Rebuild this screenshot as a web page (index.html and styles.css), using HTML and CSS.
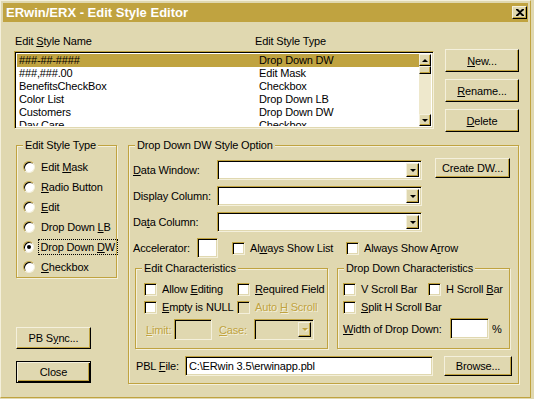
FILE: index.html
```html
<!DOCTYPE html>
<html lang="en">
<head>
    <meta charset="UTF-8">
    <title>ERwin/ERX - Edit Style Editor</title>
    <link rel="stylesheet" href="styles.css">
</head>
<body>

<div class="window">
    <div class="titlebar">
        <span class="title">ERwin/ERX - Edit Style Editor</span>
        <span class="close-btn">
            <svg width="8" height="7" viewBox="0 0 8 7"><path d="M0 0h2l2 2 2-2h2v1L5 3.5 8 6v1H6L4 5 2 7H0V6l3-2.5L0 1z" fill="#000"/></svg>
        </span>
    </div>

    <div class="content">
        <div class="top">
            <div class="list-wrap">
                <div class="col-heads">
                    <span class="head-name">Edit <u>S</u>tyle Name</span>
                    <span>Edit Style Type</span>
                </div>
                <div class="listbox">
                    <div class="rows">
                        <div class="row selected"><span class="c1">###-##-####</span><span>Drop Down DW</span></div>
                        <div class="row"><span class="c1">###,###.00</span><span>Edit Mask</span></div>
                        <div class="row"><span class="c1">BenefitsCheckBox</span><span>Checkbox</span></div>
                        <div class="row"><span class="c1">Color List</span><span>Drop Down LB</span></div>
                        <div class="row"><span class="c1">Customers</span><span>Drop Down DW</span></div>
                        <div class="row"><span class="c1">Day Care</span><span>Checkbox</span></div>
                    </div>
                    <div class="vscroll">
                        <div class="sb-btn"><span class="tri-up"></span></div>
                        <div class="sb-thumb"></div>
                        <div class="sb-track"></div>
                        <div class="sb-btn"><span class="tri-down"></span></div>
                    </div>
                </div>
            </div>
            <div class="side-btns">
                <div class="btn tall"><u>N</u>ew...</div>
                <div class="btn tall"><u>R</u>ename...</div>
                <div class="btn tall"><u>D</u>elete</div>
            </div>
        </div>

        <div class="bottom">
            <div class="left-col">
                <div class="group type-group">
                    <span class="group-title">Edit Style Type</span>
                    <div class="radio-row"><span class="radio"></span><span>Edit <u>M</u>ask</span></div>
                    <div class="radio-row"><span class="radio"></span><span><u>R</u>adio Button</span></div>
                    <div class="radio-row"><span class="radio"></span><span><u>E</u>dit</span></div>
                    <div class="radio-row"><span class="radio"></span><span>Drop Down <u>L</u>B</span></div>
                    <div class="radio-row"><span class="radio checked"></span><span class="focus">Drop Down <u>D</u>W</span></div>
                    <div class="radio-row"><span class="radio"></span><span><u>C</u>heckbox</span></div>
                </div>
                <div class="btn sync">PB S<u>y</u>nc...</div>
                <div class="btn default close">Close</div>
            </div>

            <div class="group option-group">
                <span class="group-title">Drop Down DW Style Option</span>

                <div class="opt-row">
                    <span class="opt-label"><u>D</u>ata Window:</span>
                    <div class="field combo wide"><span class="combo-arrow"><span class="tri-down"></span></span></div>
                    <div class="btn create">Create DW...</div>
                </div>
                <div class="opt-row gap">
                    <span class="opt-label">Display Column:</span>
                    <div class="field combo wide"><span class="combo-arrow"><span class="tri-down"></span></span></div>
                </div>
                <div class="opt-row gap">
                    <span class="opt-label">Da<u>t</u>a Column:</span>
                    <div class="field combo wide"><span class="combo-arrow"><span class="tri-down"></span></span></div>
                </div>
                <div class="opt-row gap">
                    <span class="acc-label">Accelerator:</span>
                    <div class="field accel"></div>
                    <label class="chk-label show-list"><span class="chk"></span><span>Al<u>w</u>ays Show List</span></label>
                    <label class="chk-label"><span class="chk"></span><span>Always Show A<u>r</u>row</span></label>
                </div>

                <div class="sub-row">
                    <div class="group edit-char">
                        <span class="group-title">Edit Characteristics</span>
                        <div class="chk-row">
                            <label class="chk-label col-a"><span class="chk"></span><span>Allow <u>E</u>diting</span></label>
                            <label class="chk-label"><span class="chk"></span><span><u>R</u>equired Field</span></label>
                        </div>
                        <div class="chk-row next">
                            <label class="chk-label col-a"><span class="chk"></span><span><u>E</u>mpty is NULL</span></label>
                            <label class="chk-label disabled"><span class="chk off"></span><span>Auto <u>H</u> Scroll</span></label>
                        </div>
                        <div class="limit-row disabled">
                            <span class="limit-label"><u>L</u>imit:</span>
                            <div class="field off limit-box"></div>
                            <span class="case-label"><u>C</u>ase:</span>
                            <div class="field off combo case-box"><span class="combo-arrow"><span class="tri-down off"></span></span></div>
                        </div>
                    </div>

                    <div class="group dd-char">
                        <span class="group-title">Drop Down Characteristics</span>
                        <div class="chk-row">
                            <label class="chk-label col-b"><span class="chk"></span><span>V Scroll Bar</span></label>
                            <label class="chk-label"><span class="chk"></span><span>H Scroll <u>B</u>ar</span></label>
                        </div>
                        <div class="chk-row next">
                            <label class="chk-label"><span class="chk"></span><span><u>S</u>plit H Scroll Bar</span></label>
                        </div>
                        <div class="width-row">
                            <span class="width-label"><u>W</u>idth of Drop Down:</span>
                            <div class="field width-box"></div>
                            <span class="pct">%</span>
                        </div>
                    </div>
                </div>

                <div class="pbl-row">
                    <span class="pbl-label">PBL <u>F</u>ile:</span>
                    <div class="field pbl-box">C:\ERwin 3.5\erwinapp.pbl</div>
                    <div class="btn browse">Browse...</div>
                </div>
            </div>
        </div>
    </div>
</div>

</body>
</html>
```

FILE: styles.css
```css
:root {
    --face: #e0d8b0;
    --light: #f4f0dc;
    --gold: #c0a340;
    --track: #eee8cc;
}
* {
    box-sizing: border-box;
}
body {
    margin: 0;
    background: var(--face);
    font-family: "Liberation Sans", Arial, sans-serif;
    font-size: 11px;
    letter-spacing: -0.15px;
    color: #000;
}
u {
    text-decoration: underline;
    text-underline-offset: 1px;
}
.window {
    width: 531px;
    height: 398px;
    padding: 2px;
    border: 1px solid var(--light);
    border-right-color: var(--gold);
    border-bottom-color: var(--gold);
}
.titlebar {
    height: 19px;
    background: var(--gold);
    display: flex;
    align-items: center;
    justify-content: space-between;
    padding: 0 1px 0 3px;
    color: #fff;
    font-weight: bold;
    font-size: 13px;
    letter-spacing: 0;
}
.close-btn {
    width: 15px;
    height: 13px;
    display: flex;
    align-items: center;
    justify-content: center;
    background: var(--face);
    border: 1px solid var(--light);
    border-right-color: #000;
    border-bottom-color: #000;
    box-shadow: inset -1px -1px var(--gold);
}

/* bevels */
.btn {
    display: flex;
    align-items: center;
    justify-content: center;
    background: var(--face);
    border: 1px solid var(--light);
    border-right-color: #000;
    border-bottom-color: #000;
    box-shadow: inset -1px -1px var(--gold);
    white-space: nowrap;
}
.btn.default {
    border: 1px solid #000;
    box-shadow: inset 1px 1px var(--light), inset -1px -1px #000, inset -2px -2px var(--gold);
}
.field {
    background: #fff;
    border: 1px solid var(--gold);
    border-right-color: var(--light);
    border-bottom-color: var(--light);
    box-shadow: inset 1px 1px #000, inset -1px -1px var(--face);
}
.field.off {
    background: var(--face);
}
.group {
    position: relative;
    border: 1px solid var(--gold);
    box-shadow: inset 1px 1px var(--light), 1px 1px var(--light);
}
.group-title {
    position: absolute;
    top: -8px;
    left: 6px;
    padding: 0 2px;
    background: var(--face);
    line-height: 14px;
    white-space: nowrap;
}

/* triangles */
.tri-down, .tri-up {
    width: 0;
    height: 0;
    border-left: 3px solid transparent;
    border-right: 3px solid transparent;
}
.tri-down {
    border-top: 3px solid #000;
}
.tri-up {
    border-bottom: 3px solid #000;
}
.tri-down.off {
    border-top-color: var(--gold);
    filter: drop-shadow(1px 1px 0 var(--light));
}

/* top area */
.content {
    padding-left: 11px;
}
.top {
    display: flex;
    height: 123px;
    padding-top: 13px;
}
.list-wrap {
    width: 420px;
}
.col-heads {
    display: flex;
    height: 13px;
    line-height: 13px;
    padding-left: 1px;
    margin-bottom: 3px;
}
.head-name {
    width: 240px;
}
.listbox {
    display: flex;
    height: 78px;
    padding: 2px;
    background: #fff;
    border: 1px solid var(--gold);
    border-right-color: var(--light);
    border-bottom-color: var(--light);
    box-shadow: inset 1px 1px #000, inset -1px -1px var(--face);
    overflow: hidden;
}
.rows {
    flex: 1;
    overflow: hidden;
}
.row {
    display: flex;
    height: 13px;
    line-height: 13px;
    padding-left: 2px;
    white-space: nowrap;
}
.row.selected {
    background: var(--gold);
}
.c1 {
    width: 240px;
}
.vscroll {
    width: 12px;
    display: flex;
    flex-direction: column;
    background: var(--track);
}
.sb-btn, .sb-thumb {
    height: 12px;
    display: flex;
    align-items: center;
    justify-content: center;
    background: var(--face);
    border: 1px solid var(--light);
    border-right-color: #000;
    border-bottom-color: #000;
    box-shadow: inset -1px -1px var(--gold);
}
.sb-thumb {
    height: 8px;
}
.sb-track {
    flex: 1;
}
.side-btns {
    margin-left: 11px;
    margin-top: 14px;
    display: flex;
    flex-direction: column;
    gap: 7px;
}
.btn.tall {
    width: 74px;
    height: 23px;
}

/* bottom area */
.bottom {
    display: flex;
}
.left-col {
    margin-left: 2px;
    width: 101px;
    display: flex;
    flex-direction: column;
}
.type-group {
    height: 133px;
    padding: 11px 0 0 6px;
}
.radio-row {
    display: flex;
    align-items: center;
    height: 20px;
    white-space: nowrap;
}
.radio {
    width: 12px;
    height: 12px;
    margin-right: 6px;
    border-radius: 50%;
    background: #fff;
    border: 1px solid var(--gold);
    border-right-color: var(--light);
    border-bottom-color: var(--light);
    box-shadow: inset 1px 1px #000;
    display: flex;
    align-items: center;
    justify-content: center;
}
.radio.checked::after {
    content: "";
    width: 4px;
    height: 4px;
    border-radius: 50%;
    background: #000;
}
.focus {
    outline: 1px dotted #000;
    outline-offset: 1px;
    padding-right: 1px;
}
.btn.sync {
    margin-top: 49px;
    width: 75px;
    height: 22px;
}
.btn.close {
    margin-top: 12px;
    width: 75px;
    height: 22px;
}

.option-group {
    margin-left: 11px;
    width: 391px;
    height: 239px;
    padding: 14px 0 0 4px;
}
.opt-row {
    display: flex;
    align-items: center;
    height: 20px;
    white-space: nowrap;
}
.opt-row.gap {
    margin-top: 6px;
}
.opt-label {
    width: 84px;
}
.combo {
    display: flex;
    justify-content: flex-end;
    height: 20px;
    padding: 2px;
}
.combo.wide {
    width: 205px;
}
.combo-arrow {
    width: 13px;
    display: flex;
    align-items: center;
    justify-content: center;
    background: var(--face);
    border: 1px solid var(--light);
    border-right-color: #000;
    border-bottom-color: #000;
    box-shadow: inset -1px -1px var(--gold);
}
.btn.create {
    align-self: flex-start;
    margin-top: -2px;
    margin-left: 13px;
    width: 75px;
    height: 20px;
}
.acc-label {
    width: 64px;
}
.field.accel {
    width: 21px;
    height: 20px;
}
.chk-label {
    display: flex;
    align-items: center;
    white-space: nowrap;
}
.chk-label.show-list {
    margin-left: 14px;
    width: 114px;
}
.chk {
    width: 13px;
    height: 13px;
    margin-right: 5px;
    flex-shrink: 0;
    background: #fff;
    border: 1px solid var(--gold);
    border-right-color: var(--light);
    border-bottom-color: var(--light);
    box-shadow: inset 1px 1px #000, inset -1px -1px var(--face);
}
.chk.off {
    background: var(--face);
}
.disabled {
    color: var(--gold);
    text-shadow: 1px 1px 0 var(--light);
}

.sub-row {
    display: flex;
    margin: 10px 0 0 2px;
}
.edit-char {
    width: 193px;
    height: 81px;
    padding: 12px 0 0 8px;
}
.dd-char {
    margin-left: 9px;
    width: 173px;
    height: 81px;
    padding: 12px 0 0 5px;
}
.chk-row {
    display: flex;
    height: 16px;
}
.chk-row.next {
    margin-top: 2px;
}
.col-a {
    width: 93px;
}
.col-b {
    width: 85px;
}
.limit-row {
    display: flex;
    align-items: center;
    margin-top: 4px;
    height: 21px;
}
.limit-label {
    margin-left: 2px;
    width: 28px;
}
.limit-box {
    width: 38px;
    height: 21px;
}
.case-label {
    margin-left: 7px;
    width: 35px;
}
.case-box {
    width: 60px;
    height: 21px;
}
.width-row {
    display: flex;
    align-items: center;
    margin-top: 3px;
    height: 21px;
    white-space: nowrap;
}
.width-label {
    width: 107px;
}
.width-box {
    width: 39px;
    height: 21px;
}
.pct {
    margin-left: 3px;
}
.pbl-row {
    display: flex;
    align-items: center;
    margin-top: 7px;
    height: 20px;
}
.pbl-label {
    margin-left: 3px;
    width: 49px;
}
.pbl-box {
    width: 248px;
    height: 20px;
    padding: 0 3px;
    line-height: 18px;
    white-space: nowrap;
}
.btn.browse {
    margin-left: 11px;
    margin-top: -1px;
    width: 68px;
    height: 20px;
}
```
